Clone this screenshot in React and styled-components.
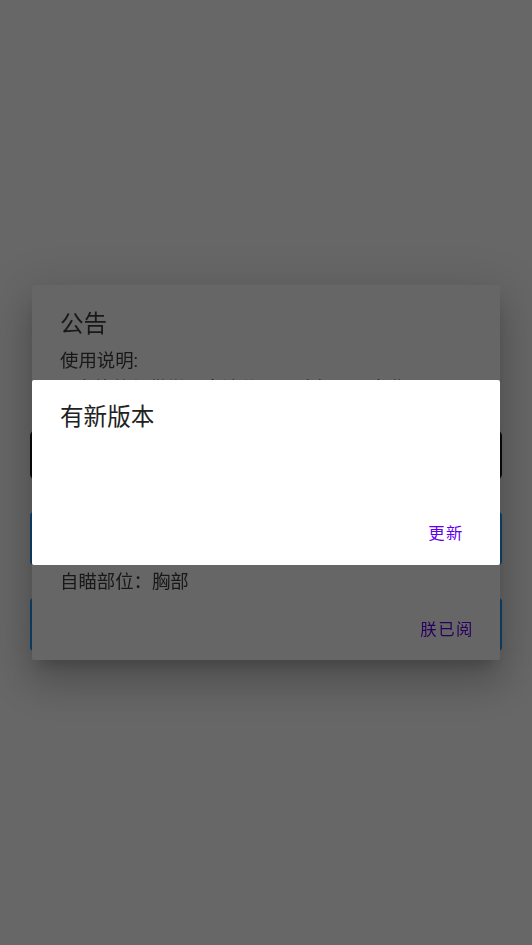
import React from 'react'
import styled, { createGlobalStyle } from 'styled-components'

const GlobalStyle = createGlobalStyle`
  html, body {
    margin: 0;
    padding: 0;
    background: #676767;
    font-family: Roboto, 'Noto Sans CJK SC', sans-serif;
  }
`

const Screen = styled.div`
  position: relative;
  min-height: 100vh;
  background: #676767;
  overflow: hidden;
`

const Content = styled.div`
  display: flex;
  flex-direction: column;
  padding: 430px 30px 0;
`

const TextInput = styled.div`
  height: 50px;
  box-sizing: border-box;
  border: 2px solid #0a0a0a;
  border-radius: 6px;
`

const BlueButton = styled.div`
  height: 53px;
  margin-top: ${(p) => p.$gap}px;
  border-radius: 4px;
  background: #0f4470;
`

const Overlay = styled.div`
  position: fixed;
  inset: 0;
  display: flex;
  align-items: center;
  justify-content: center;
`

const Dialog = styled.div`
  width: 468px;
  box-sizing: border-box;
  display: flex;
  flex-direction: column;
  height: ${(p) => (p.$height ? `${p.$height}px` : 'auto')};
  padding-top: ${(p) => p.$padTop}px;
  border-radius: 2px;
  background: ${(p) => (p.$dim ? '#666666' : '#ffffff')};
  box-shadow: ${(p) =>
    p.$dim
      ? '0 11px 15px -7px rgba(0,0,0,.2), 0 24px 38px 3px rgba(0,0,0,.14), 0 9px 46px 8px rgba(0,0,0,.12)'
      : 'none'};
`

const Title = styled.div`
  padding: 0 28px;
  font-size: 23.6px;
  line-height: 32px;
  color: ${(p) => (p.$dim ? '#181818' : '#212121')};
`

const Body = styled.div`
  flex: 1;
  margin-top: 7px;
  padding: 0 28px;
  font-size: 18.4px;
  line-height: 27.7px;
  color: #181818;
  white-space: nowrap;
  overflow: hidden;
`

const Actions = styled.div`
  display: flex;
  justify-content: flex-end;
  margin-top: ${(p) => p.$top}px;
  padding: 0 ${(p) => p.$right}px ${(p) => p.$bottom}px 0;
`

const TextButton = styled.button`
  height: 36px;
  padding: 0 8px;
  border: none;
  background: transparent;
  font-family: Roboto, 'Noto Sans CJK SC', sans-serif;
  font-size: 16.4px;
  letter-spacing: 1.5px;
  color: ${(p) => (p.$dim ? '#28005f' : '#6200ee')};
  cursor: pointer;
`

const noticeLines = [
  '使用说明:',
  '1.本软件仅供学习交流使用，请勿用于商业',
  '2.启动游戏后打开悬浮窗即可使用',
  '3.请勿在排位赛中使用',
  '4.遇到问题请联系作者',
  '5.更新请关注公告',
  '当前版本：1.0',
  '自瞄开关：开启',
  '自瞄部位：胸部',
]

export default function App() {
  return (
    <Screen>
      <GlobalStyle />
      <Content>
        <TextInput />
        <BlueButton $gap={32} />
        <BlueButton $gap={33} />
      </Content>

      <Overlay>
        <Dialog $dim $padTop={23}>
          <Title $dim>公告</Title>
          <Body>
            {noticeLines.map((line, i) => (
              <div key={i}>{line}</div>
            ))}
          </Body>
          <Actions $top={14} $right={18} $bottom={14}>
            <TextButton $dim>朕已阅</TextButton>
          </Actions>
        </Dialog>
      </Overlay>

      <Overlay>
        <Dialog $height={185} $padTop={21}>
          <Title>有新版本</Title>
          <Body />
          <Actions $top={0} $right={28} $bottom={15}>
            <TextButton>更新</TextButton>
          </Actions>
        </Dialog>
      </Overlay>
    </Screen>
  )
}
